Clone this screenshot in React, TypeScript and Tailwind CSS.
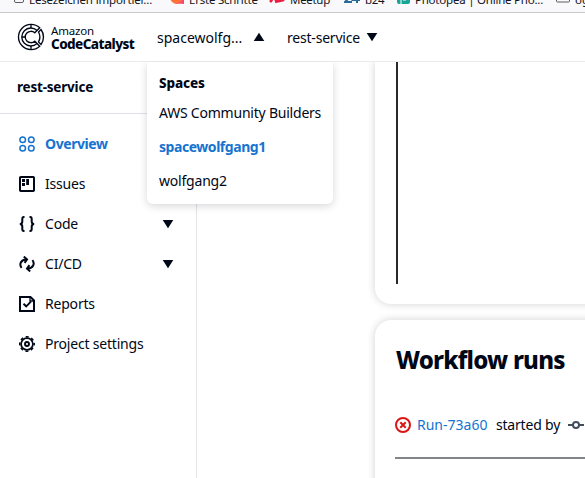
import type { ReactNode } from "react";

function Glyph({ children, size = 16 }: { children: ReactNode; size?: number }) {
  return (
    <svg
      width={size}
      height={size}
      viewBox="0 0 16 16"
      fill="none"
      stroke="currentColor"
      strokeWidth="2"
      className="block shrink-0"
    >
      {children}
    </svg>
  );
}

function OverviewIcon() {
  return (
    <Glyph>
      <g strokeWidth="1.5">
        <circle cx="3.7" cy="3.7" r="2.8" />
        <circle cx="12.3" cy="3.7" r="2.8" />
        <circle cx="3.7" cy="12.3" r="2.8" />
        <circle cx="12.3" cy="12.3" r="2.8" />
      </g>
    </Glyph>
  );
}

function IssuesIcon() {
  return (
    <Glyph>
      <rect x="1" y="1" width="14" height="14" rx="0.8" />
      <path d="M3 3h3v3H3zM3 7h3v3H3zM7.2 3H10v6H7.2z" fill="currentColor" stroke="none" />
    </Glyph>
  );
}

function CodeIcon() {
  return (
    <Glyph>
      <path d="M5.500 1H4.800Q3.300 1 3.300 3v2.500Q3.300 8 .8 8 3.300 8 3.300 10.500V13q0 2 1.500 2h.7M10.500 1h.7q1.500 0 1.500 2v2.500Q12.700 8 15.200 8 12.700 8 12.700 10.500V13q0 2-1.500 2h-.7" />
    </Glyph>
  );
}

function PipelineIcon() {
  return (
    <Glyph>
      <path d="M2.600 11.800C-.1 8.500 1.800 3.700 7 3.500M13.400 4.200c2.700 3.300.8 8.100-4.400 8.300" />
      <path d="M4.800.6 8 3.400 5.600 6.800M11.200 15.400 8 12.600 10.400 9.200" />
    </Glyph>
  );
}

function ReportsIcon() {
  return (
    <Glyph>
      <path d="M1 1h10.500L15 4.500V15H1z" />
      <path d="M11 1v4h4" strokeWidth="1.3" />
      <path d="m4.500 7.700 2.700 2.600 4.700-4.700" strokeWidth="1.900" />
    </Glyph>
  );
}

function SettingsIcon() {
  return (
    <Glyph>
      <circle cx="8" cy="8" r="5.900" strokeWidth="1.700" />
      <circle cx="8" cy="8" r="7.200" strokeWidth="1.600" strokeDasharray="3 2.655" strokeDashoffset="1.500" />
      <circle cx="8" cy="8" r="2" strokeWidth="1.900" />
    </Glyph>
  );
}

function Logo() {
  return (
    <svg width="28" height="28" viewBox="0 0 28 28" fill="none" stroke="currentColor" strokeWidth="1.350" className="-ml-px mr-px block shrink-0">
      <path d="M22.700 4.800A12.600 12.600 0 1 0 22.700 23.200L17.800 18.200A5.700 5.700 0 1 1 17.800 9.800z" />
      <path d="M20 7.500A9 9 0 1 0 20 20.500" />
      <path d="M24 6.500A12.600 12.600 0 0 1 24 21.500L21.500 19Q24.300 14 21.500 9z" />
      <path d="M14 1.400V5M14 23v3.600M5 14h3.300" />
    </svg>
  );
}

function Caret({ up = false }: { up?: boolean }) {
  return (
    <svg width="12" height="10" viewBox="0 0 12 10" fill="currentColor" className="block shrink-0">
      <path d={up ? "M6 .8 11.300 9H.7z" : "M.7 1h10.600L6 9.200z"} />
    </svg>
  );
}

function BookmarkBar() {
  return (
    <div className="h-[13px] shrink-0 overflow-hidden border-b border-[#c8c8cc] bg-[#f9f9fb] text-[11.500px] text-[#15141a]">
      <div className="-mt-2 flex h-4 items-center whitespace-nowrap leading-4">
        <svg width="10" height="11" viewBox="0 0 10 11" fill="none" stroke="#5b5b66" className="mb-1 ml-[14px] mr-[5px] shrink-0">
          <rect x=".5" y=".5" width="9" height="9" rx="1.500" />
          <path d="M3 5h4" />
        </svg>
        <span className="w-[141px] shrink-0 tracking-[-0.150px]">Lesezeichen importier...</span>
        <svg width="14" height="14" viewBox="0 0 14 14" className="mb-1.5 mr-[5px] shrink-0">
          <circle cx="7" cy="7" r="7" fill="#ff7139" />
          <path d="M4 13Q13 14 14 5v9z" fill="#f34870" />
        </svg>
        <span className="w-[80px] shrink-0 tracking-[-0.220px]">Erste Schritte</span>
        <svg width="16" height="14" viewBox="0 0 16 14" fill="none" stroke="#ed1c40" strokeWidth="3" strokeLinecap="round" className="mb-1.5 mr-[5px] shrink-0">
          <path d="m2 11 3-7 2 6 4-6-2 7 5-1" />
        </svg>
        <span className="w-[54px] shrink-0 tracking-[-0.300px]">Meetup</span>
        <svg width="16" height="13" viewBox="0 0 16 13" fill="none" stroke="#286a9c" strokeWidth="2" className="mb-1 mr-[5px] shrink-0">
          <path d="M1 3q6-4 5 2l-5 5h7M13 11V2L9 8h7" />
        </svg>
        <span className="w-[32px] shrink-0 tracking-[-0.300px]">b24</span>
        <svg width="13" height="14" viewBox="0 0 13 14" className="mb-1.5 mr-[5px] shrink-0">
          <rect width="13" height="14" rx="2" fill="#18a497" />
          <path d="M4 14V4h5v6H6" stroke="#fff" fill="none" />
        </svg>
        <span className="w-[141px] shrink-0 tracking-[-0.220px]">Photopea | Online Pho...</span>
        <svg width="14" height="12" viewBox="0 0 14 12" fill="none" stroke="#5b5b66" className="mb-1.5 mr-[5px] shrink-0">
          <path d="M.5 1h5l1 1h7v8q0 1-1 1h-11q-1 0-1-1z" />
        </svg>
        <span>og</span>
      </div>
    </div>
  );
}

function SpacesMenu() {
  return (
    <div className="absolute left-[-10px] top-[49px] z-20 h-[142px] w-[186px] rounded-b-md bg-white px-3 pt-[11px] shadow-[0_2px_8px_rgba(0,7,22,0.16)] [clip-path:inset(0_-12px_-12px_-12px)]">
      <div className="h-[28px] text-[13.500px] font-extrabold leading-5 tracking-[-0.150px]">Spaces</div>
      <div className="h-[34px] whitespace-nowrap text-[14px] leading-6 tracking-[-0.220px]">AWS Community Builders</div>
      <div className="h-[34px] text-[14px] font-bold leading-6 tracking-[-0.450px] text-[#1673d0]">spacewolfgang1</div>
      <div className="text-[14px] leading-6 tracking-[-0.200px]">wolfgang2</div>
    </div>
  );
}

function Header() {
  return (
    <header className="relative z-10 flex h-[49px] shrink-0 items-center border-b border-[#e9ebed] bg-white">
      <div className="ml-[18px] flex w-[129px] items-center gap-[5px]">
        <Logo />
        <div className="whitespace-nowrap pt-px">
          <div className="text-[11.500px] leading-[12px] tracking-[-0.200px]">Amazon</div>
          <div className="text-[13.500px] font-extrabold leading-[14px] tracking-[-0.580px]">CodeCatalyst</div>
        </div>
      </div>
      <div className="relative ml-[10px] flex h-[49px] w-[130px] items-center text-[14px]">
        <span className="w-[96px]">spacewolfg...</span>
        <Caret up />
        <SpacesMenu />
      </div>
      <div className="flex items-center text-[14px] tracking-[-0.200px]">
        <span className="w-[79px]">rest-service</span>
        <Caret />
      </div>
    </header>
  );
}

function NavItem({ icon, label, active = false, expandable = false }: { icon: ReactNode; label: string; active?: boolean; expandable?: boolean }) {
  return (
    <div className={active ? "flex h-10 items-center text-[#1673d0]" : "flex h-10 items-center"}>
      {icon}
      <span className={active ? "ml-[10px] flex-1 pb-0.5 text-[14px] font-bold tracking-[-0.420px]" : "ml-[10px] flex-1 pb-0.5 text-[14px] tracking-[-0.200px]"}>{label}</span>
      {expandable && <Caret />}
    </div>
  );
}

function Sidebar() {
  return (
    <nav className="w-[197px] shrink-0 border-r border-[#e2e4e7]">
      <div className="flex h-[52px] items-center border-b border-[#dfe3e7] pl-[17px] text-[13.500px] font-bold tracking-[-0.200px]">rest-service</div>
      <div className="pl-[19px] pr-[22px] pt-[10px]">
        <NavItem icon={<OverviewIcon />} label="Overview" active />
        <NavItem icon={<IssuesIcon />} label="Issues" />
        <NavItem icon={<CodeIcon />} label="Code" expandable />
        <NavItem icon={<PipelineIcon />} label="CI/CD" expandable />
        <NavItem icon={<ReportsIcon />} label="Reports" />
        <NavItem icon={<SettingsIcon />} label="Project settings" />
      </div>
    </nav>
  );
}

function Content() {
  return (
    <main className="flex min-w-0 flex-1 flex-col gap-4 overflow-hidden pl-[178px]">
      <section className="h-[242px] w-[300px] shrink-0 rounded-bl-[16px] bg-white pl-[21px] shadow-[0_0_8px_rgba(0,7,22,0.18)]">
        <div className="h-[222px] w-[2px] bg-[#292929]" />
      </section>
      <section className="h-[220px] w-[300px] shrink-0 rounded-tl-[16px] bg-white pl-5 pt-[22px] shadow-[0_0_8px_rgba(0,7,22,0.18)]">
        <h2 className="ml-px h-9 text-[24px] font-extrabold leading-9 tracking-[-0.780px]">Workflow runs</h2>
        <div className="mt-[35px] flex h-6 items-center whitespace-nowrap text-[14px]">
          <span className="text-[#d91515]">
            <Glyph>
              <circle cx="8" cy="8" r="7" />
              <path d="m5.300 5.300 5.400 5.400m0-5.400-5.400 5.400" />
            </Glyph>
          </span>
          <span className="ml-[6px] w-[79px] pb-px text-[#1673d0]">Run-73a60</span>
          <span className="w-[72px] pb-px tracking-[-0.200px]">started by</span>
          <span className="text-[#414d5c]">
            <Glyph>
              <path d="M0 8h5m6 0h5" />
              <circle cx="8" cy="8" r="3" />
            </Glyph>
          </span>
        </div>
        <div className="mt-[20px] border-t-2 border-[#828589]" />
      </section>
    </main>
  );
}

export default function App() {
  return (
    <div className="flex h-[478px] w-[585px] flex-col overflow-hidden bg-white font-['Noto_Sans',sans-serif] text-[#000716]">
      <BookmarkBar />
      <Header />
      <div className="flex min-h-0 flex-1">
        <Sidebar />
        <Content />
      </div>
    </div>
  );
}
